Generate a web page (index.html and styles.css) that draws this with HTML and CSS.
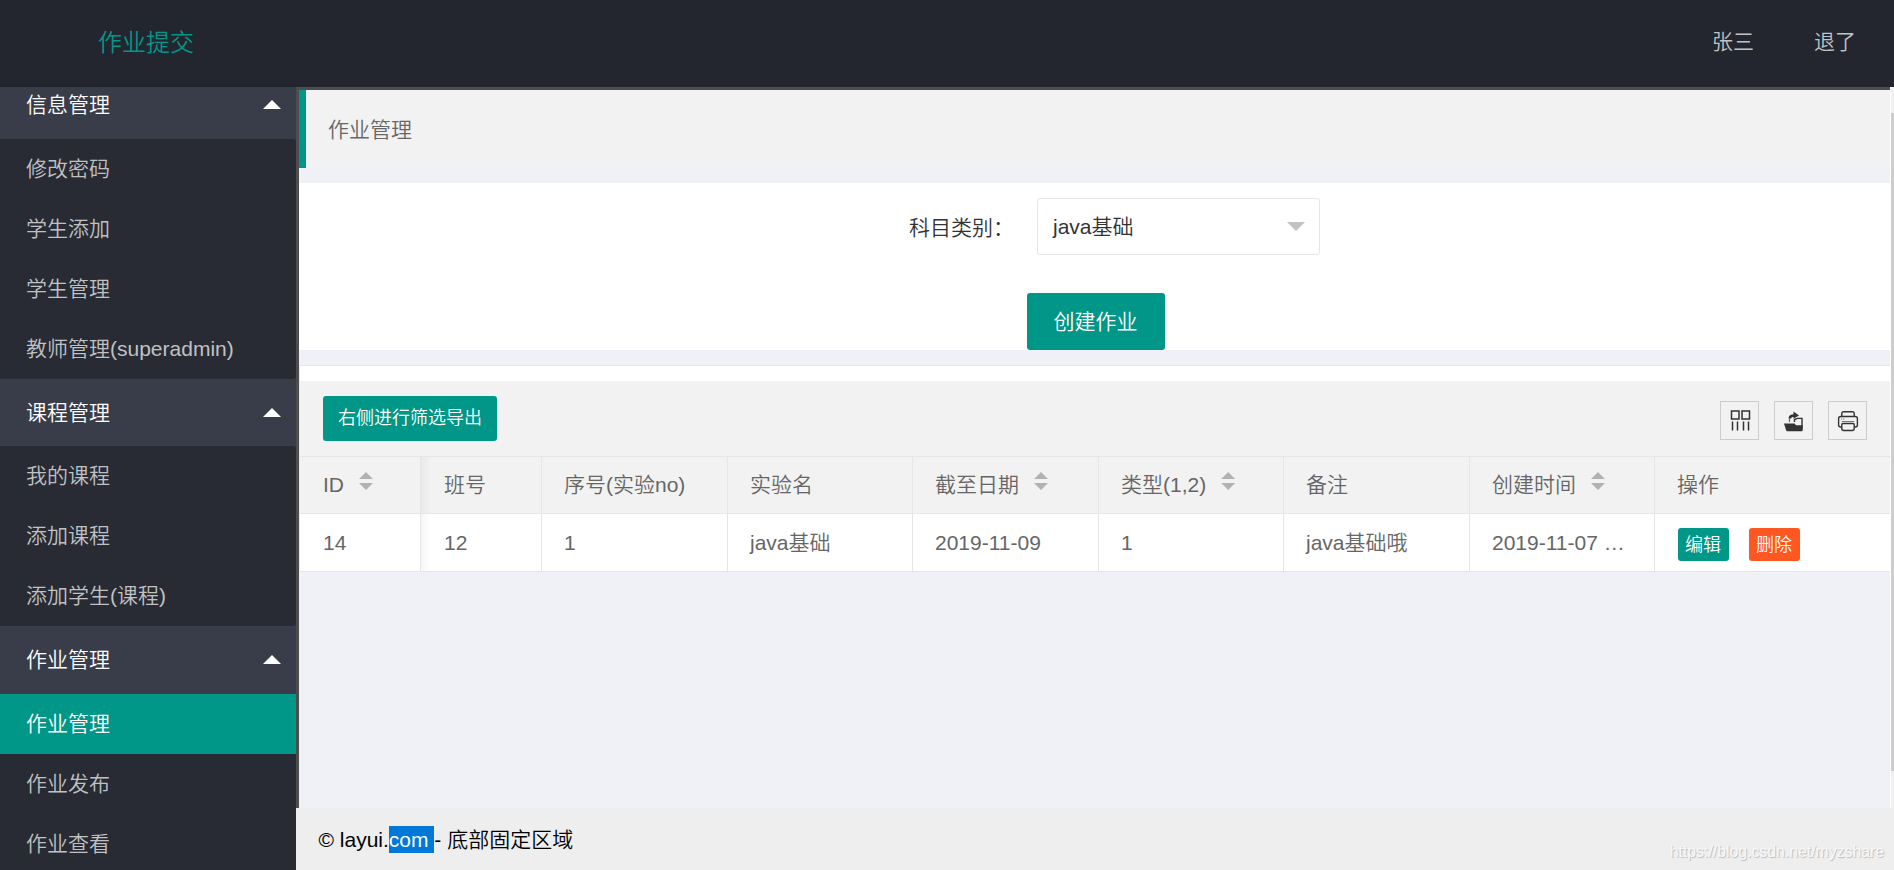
FILE: index.html
```html
<!DOCTYPE html>
<html lang="zh-CN">
<head>
    <meta charset="UTF-8">
    <meta name="viewport" content="width=device-width, initial-scale=1.0">
    <title>作业提交</title>
    <link rel="stylesheet" href="styles.css">
</head>
<body>
    <div class="layout">
        <header class="header">
            <div class="logo">作业提交</div>
            <ul class="header-nav">
                <li><a href="#">张三</a></li>
                <li><a href="#">退了</a></li>
            </ul>
        </header>

        <div class="main">
            <nav class="side">
                <div class="side-scroll">
                    <a class="nav-title" href="#">信息管理<span class="nav-more"></span></a>
                    <div class="nav-child">
                        <a href="#">修改密码</a>
                        <a href="#">学生添加</a>
                        <a href="#">学生管理</a>
                        <a href="#">教师管理(superadmin)</a>
                    </div>
                    <a class="nav-title" href="#">课程管理<span class="nav-more"></span></a>
                    <div class="nav-child">
                        <a href="#">我的课程</a>
                        <a href="#">添加课程</a>
                        <a href="#">添加学生(课程)</a>
                    </div>
                    <a class="nav-title" href="#">作业管理<span class="nav-more"></span></a>
                    <div class="nav-child">
                        <a class="active" href="#">作业管理</a>
                        <a href="#">作业发布</a>
                        <a href="#">作业查看</a>
                    </div>
                </div>
            </nav>

            <div class="right">
                <div class="frame">
                    <div class="body">
                        <div class="quote">作业管理</div>

                        <div class="form">
                            <div class="form-item">
                                <label class="form-label">科目类别：</label>
                                <div class="select"><span>java基础</span><i class="select-edge"></i></div>
                            </div>
                            <button class="btn">创建作业</button>
                        </div>

                        <div class="table-view">
                            <div class="tool">
                                <button class="btn btn-sm">右侧进行筛选导出</button>
                                <div class="tool-self">
                                    <span class="tool-icon">
                                        <svg width="22" height="22" viewBox="0 0 22 22" fill="none" stroke="#333" stroke-width="1.5">
                                            <path d="M2.500 1h7.500v8H2.500zM13 1h7.500v8H13z"/>
                                            <path d="M3.500 11.500V20.500M8.500 11.500V20.500M14.500 11.500V20.500M19.500 11.500V20.500"/>
                                        </svg>
                                    </span>
                                    <span class="tool-icon">
                                        <svg width="22" height="22" viewBox="0 0 22 22">
                                            <path d="M6.500 12V8.500" fill="none" stroke="#666" stroke-width="1.200"/>
                                            <path d="M6.800 8.500Q7 5.500 11 5.500" fill="none" stroke="#333" stroke-width="2.600"/>
                                            <path d="M10.500 1.500l5.500 4-5.500 3.300z" fill="#333"/>
                                            <path d="M11.500 12V9.500L14.500 8.400h4.500v10" fill="none" stroke="#333" stroke-width="1.400"/>
                                            <path d="M1 13.500h10.500l1.500 1.800h6.700v5q0 .9-1 .9H4.500q-1 0-1.400-1z" fill="#333"/>
                                        </svg>
                                    </span>
                                    <span class="tool-icon">
                                        <svg width="22" height="22" viewBox="0 0 22 22" fill="none" stroke="#333" stroke-width="1.4">
                                            <path d="M4.800 6V3.500q0-1.800 1.800-1.800h8.800q1.800 0 1.800 1.800V6"/>
                                            <path d="M4.800 17H3.500q-1.900 0-1.900-1.900V8.500Q1.600 6.500 4 6.500h14q2.400 0 2.400 2v6.600q0 1.900-1.900 1.900h-1.300"/>
                                            <path d="M4.800 14.500q0-1 1-1h10.400q1 0 1 1v4q0 2-2 2H6.800q-2 0-2-2z"/>
                                            <path d="M4.800 11.500h12.400M4 9h1.200M6.200 9h1.200" stroke="#777" stroke-width="1"/>
                                        </svg>
                                    </span>
                                </div>
                            </div>
                            <table class="table">
                                <colgroup>
                                    <col class="col-fixed"><col class="col-class"><col class="col-wide"><col class="col-mid"><col class="col-wide"><col class="col-mid"><col class="col-wide"><col class="col-mid"><col>
                                </colgroup>
                                <thead>
                                    <tr>
                                        <th>ID<span class="sort"></span></th>
                                        <th class="shaded">班号</th>
                                        <th>序号(实验no)</th>
                                        <th>实验名</th>
                                        <th>截至日期<span class="sort"></span></th>
                                        <th>类型(1,2)<span class="sort"></span></th>
                                        <th>备注</th>
                                        <th>创建时间<span class="sort"></span></th>
                                        <th>操作</th>
                                    </tr>
                                </thead>
                                <tbody>
                                    <tr>
                                        <td>14</td>
                                        <td class="shaded">12</td>
                                        <td>1</td>
                                        <td>java基础</td>
                                        <td>2019-11-09</td>
                                        <td>1</td>
                                        <td>java基础哦</td>
                                        <td>2019-11-07 …</td>
                                        <td>
                                            <div class="actions">
                                                <a class="btn btn-xs" href="#">编辑</a>
                                                <a class="btn btn-xs btn-danger" href="#">删除</a>
                                            </div>
                                        </td>
                                    </tr>
                                </tbody>
                            </table>
                        </div>
                    </div>
                    <div class="scrollbar"><div class="scroll-thumb"></div></div>
                </div>
                <footer class="footer">© layui.<span class="selected">com </span>- 底部固定区域</footer>
            </div>
        </div>
        <div class="watermark">https://blog.csdn.net/myzshare</div>
    </div>
</body>
</html>
```
FILE: styles.css
```css
* {
    box-sizing: border-box;
}
body {
    margin: 0;
    font-family: "Liberation Sans", "Noto Sans CJK SC", sans-serif;
    font-weight: 350;
    font-size: 21px;
    color: #333;
}
a {
    color: inherit;
    text-decoration: none;
}
.layout {
    position: relative;
    display: flex;
    flex-direction: column;
    width: 1894px;
    height: 870px;
    overflow: hidden;
}

/* header */
.header {
    display: flex;
    justify-content: space-between;
    flex: none;
    height: 87px;
    padding: 0 38px 0 98px;
    background: #23262E;
    line-height: 84px;
}
.logo {
    color: #009688;
    font-size: 24px;
    line-height: 86px;
}
.header-nav {
    display: flex;
    gap: 60px;
    margin: 0;
    padding: 0;
    list-style: none;
    color: #c1c2c5;
}

/* side menu */
.main {
    display: flex;
    flex: 1;
    min-height: 0;
}
.side {
    flex: none;
    width: 296px;
    overflow: hidden;
    background: #393D49;
}
.side-scroll {
    margin-top: -15.75px;
}
.side a {
    display: flex;
    align-items: center;
    padding-left: 26px;
    padding-bottom: 4px;
}
.nav-title {
    justify-content: space-between;
    height: 67.5px;
    padding-right: 15px;
    color: #fff;
}
.nav-more {
    margin-top: 3px;
    border: 9px solid transparent;
    border-top: 0;
    border-bottom-color: #fff;
}
.nav-child {
    border-radius: 0 3px 3px 0;
    background: #282B33;
    color: #c0c1c3;
}
.nav-child a {
    height: 60px;
}
.nav-child .active {
    background: #009688;
    color: #fff;
}

/* content */
.right {
    display: flex;
    flex-direction: column;
    flex: 1;
    min-width: 0;
}
.frame {
    display: flex;
    flex: 1;
    gap: 1px;
    min-height: 0;
}
.body {
    flex: 1;
    min-width: 0;
    border-top: 3px solid #4d4d4d;
    border-left: 3px solid #4d4d4d;
    background: #F0F1F7;
}
.scrollbar {
    width: 3px;
    padding-top: 26px;
    background: #f1f1f1;
}
.scroll-thumb {
    height: 658px;
    background: #cdcdcd;
}
.quote {
    height: 78px;
    margin-bottom: 15px;
    padding-left: 22px;
    border-left: 7px solid #009688;
    background: #F2F2F2;
    color: #666;
    line-height: 79px;
}
.form {
    display: flex;
    flex-direction: column;
    align-items: center;
    height: 167px;
    margin-bottom: 15px;
    padding: 15px 0 0 2px;
    background: #fff;
}
.form-item {
    display: flex;
    align-items: center;
    margin: 0 0 38px 38px;
}
.form-label {
    width: 128px;
    padding-bottom: 2px;
    white-space: nowrap;
}
.select {
    display: flex;
    align-items: center;
    justify-content: space-between;
    width: 283px;
    height: 57px;
    padding: 0 14px 3px 15px;
    border: 1px solid #e6e6e6;
    border-radius: 3px;
}
.select-edge {
    margin-top: 2px;
    border: 9px solid transparent;
    border-bottom: 0;
    border-top-color: #c2c2c2;
}
.btn {
    height: 57px;
    padding: 0 27px 4px;
    border: 0;
    border-radius: 3px;
    background: #009688;
    color: #fff;
    font: inherit;
    white-space: nowrap;
}
.btn-sm {
    height: 45px;
    padding: 0 15px 5px;
    font-size: 18px;
}
.btn-xs {
    height: 33px;
    padding: 0 8px 0 7px;
    font-size: 18px;
    line-height: 34px;
}
.btn-danger {
    background: #FF5722;
}

/* table */
.table-view {
    padding-top: 15px;
    border-top: 1px solid #e6e6e6;
    border-left: 1px solid #e6e6e6;
    background: #fff;
}
.tool {
    display: flex;
    align-items: flex-start;
    justify-content: space-between;
    height: 76px;
    padding: 15px 23px;
    border-bottom: 1px solid #e6e6e6;
    background: #F2F2F2;
}
.tool-self {
    display: flex;
    gap: 15px;
    padding-top: 5px;
}
.tool-icon {
    display: flex;
    align-items: center;
    justify-content: center;
    width: 39px;
    height: 39px;
    border: 1px solid #ccc;
}
.table {
    width: 100%;
    border-collapse: separate;
    border-spacing: 0;
    table-layout: fixed;
    color: #666;
}
.col-fixed,
.col-class {
    width: 121px;
}
.col-wide {
    width: 186px;
}
.col-mid {
    width: 185px;
}
.table th,
.table td {
    height: 57px;
    padding: 0 0 0 22px;
    border-right: 1px solid #e6e6e6;
    border-bottom: 1px solid #e6e6e6;
    font-weight: inherit;
    line-height: 32px;
    text-align: left;
    white-space: nowrap;
}
.table td {
    height: 58px;
}
.table th {
    background: #F2F2F2;
}
.table th:first-child,
.table td:first-child,
.table td:last-child {
    padding-left: 23px;
}
.table th:last-child,
.table td:last-child {
    border-right: 0;
}
.table .shaded {
    padding-left: 23px;
    background-image: linear-gradient(to right, rgba(0,0,0,0.04), transparent 10px);
}
.sort {
    display: inline-block;
    width: 14px;
    height: 18px;
    margin-left: 15px;
    background: #b2b2b2;
    vertical-align: 2px;
    clip-path: polygon(50% 0, 100% 7px, 0 7px, 0 11px, 100% 11px, 50% 100%, 0 11px, 0 7px);
}
.actions {
    display: flex;
    gap: 20px;
    padding-top: 4px;
}

/* footer */
.footer {
    height: 62px;
    padding-left: 22.5px;
    background: #eee;
    color: #000;
    line-height: 64px;
}
.selected {
    display: inline-block;
    height: 27px;
    background: #0078D7;
    color: #fff;
    line-height: 27px;
    white-space: pre;
}
.watermark {
    position: absolute;
    right: 10px;
    bottom: 9px;
    color: #f8f8f8;
    font-size: 15.8px;
    text-shadow: 1px 1px 1px #bbb;
}
```
